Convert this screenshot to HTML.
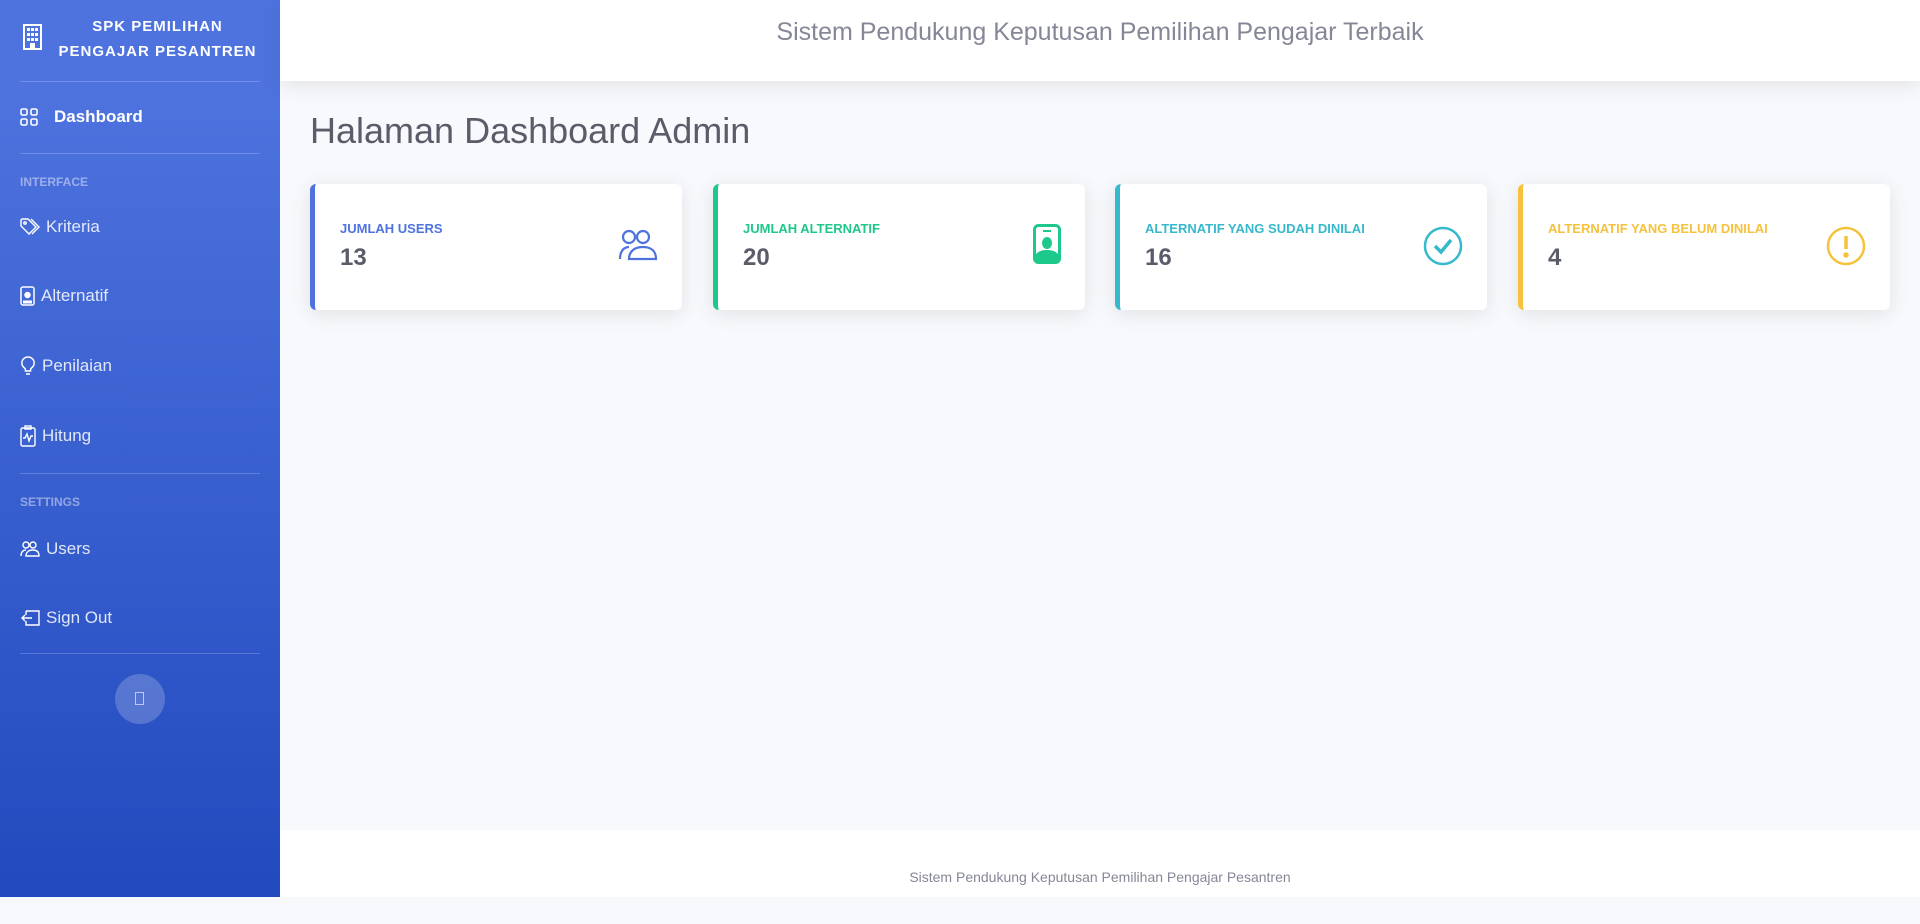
<!DOCTYPE html>
<html><head><meta charset="utf-8"><style>
*{margin:0;padding:0;box-sizing:border-box}
body{width:1920px;height:897px;overflow:hidden;background:#f8f9fc;font-family:"Liberation Sans",sans-serif;position:relative}
.sb{position:absolute;left:0;top:0;width:280px;height:897px;background:linear-gradient(180deg,#4e73df 10%,#224abe 100%);color:#fff}
.brand{position:absolute;left:0;top:0;width:280px;height:81px}
.brand .t{position:absolute;left:50px;top:14px;width:215px;text-align:center;font-weight:bold;font-size:15px;letter-spacing:1px;line-height:25px;white-space:nowrap}
.hr{position:absolute;left:20px;width:240px;border-top:1px solid rgba(255,255,255,.2)}
.it{position:absolute;left:20px;font-size:17px;color:rgba(255,255,255,.85);display:flex;align-items:center;gap:6px;height:24px}
.hd{position:absolute;left:20px;font-size:12px;font-weight:bold;color:rgba(255,255,255,.45)}
.top{position:absolute;left:280px;top:0;width:1640px;height:81px;background:#fff;box-shadow:0 4px 20px rgba(58,59,69,.12);text-align:center;font-size:25px;line-height:64px;color:#858796}
h1{position:absolute;left:310px;top:110px;font-weight:normal;font-size:36px;color:#5a5c69}
.card{position:absolute;top:184px;width:372px;height:126px;background:#fff;border-radius:6px;border-left:5px solid;box-shadow:0 4px 20px rgba(58,59,69,.12)}
.card .l{position:absolute;left:25px;top:37px;font-size:13px;font-weight:bold}
.card .v{position:absolute;left:25px;top:60px;font-size:24px;font-weight:bold;color:#5a5c69}
.card svg{position:absolute;right:24px;top:45px}
.foot{position:absolute;left:280px;top:830px;width:1640px;height:67px;background:#fff;text-align:center;font-size:14px;color:#858796;line-height:94px}
</style></head><body>
<div class="sb">
 <div class="brand">
  <svg style="position:absolute;left:23px;top:24px" width="19" height="26" viewBox="0 0 19 26" fill="none" stroke="#fff" stroke-width="2"><rect x="1" y="1" width="17" height="24"/><g fill="#fff" stroke="none"><rect x="4" y="4" width="3" height="3"/><rect x="8" y="4" width="3" height="3"/><rect x="12" y="4" width="3" height="3"/><rect x="4" y="9" width="3" height="3"/><rect x="8" y="9" width="3" height="3"/><rect x="12" y="9" width="3" height="3"/><rect x="4" y="14" width="3" height="3"/><rect x="8" y="14" width="3" height="3"/><rect x="12" y="14" width="3" height="3"/><rect x="7" y="19" width="5" height="6"/></g></svg>
  <div class="t">SPK PEMILIHAN<br>PENGAJAR PESANTREN</div>
 </div>
 <div class="hr" style="top:81px"></div>
 <div class="it" style="top:105px;color:#fff;font-weight:bold;gap:16px"><svg width="18" height="18" viewBox="0 0 18 18" fill="none" stroke="#fff" stroke-width="1.6"><rect x="1" y="1" width="6" height="6" rx="1.5"/><rect x="11" y="1" width="6" height="6" rx="1.5"/><rect x="1" y="11" width="6" height="6" rx="1.5"/><rect x="11" y="11" width="6" height="6" rx="1.5"/></svg>Dashboard</div>
 <div class="hr" style="top:153px"></div>
 <div class="hd" style="top:175px">INTERFACE</div>
 <div class="it" style="top:215px"><svg width="20" height="18" viewBox="0 0 20 18" fill="none" stroke="#fff" stroke-width="1.4"><path d="M1 2v6l8 8 7-7-8-8H2z"/><circle cx="5" cy="5" r="1.2"/><path d="M11 1l8 8-7 7"/></svg>Kriteria</div>
 <div class="it" style="top:284px"><svg width="15" height="20" viewBox="0 0 15 20" fill="none" stroke="#fff" stroke-width="1.5"><rect x="1" y="1" width="13" height="18" rx="2"/><circle cx="7.5" cy="9" r="2.5" fill="#fff"/><path d="M3 16h9" stroke-width="3"/></svg>Alternatif</div>
 <div class="it" style="top:354px"><svg width="16" height="20" viewBox="0 0 16 20" fill="none" stroke="#fff" stroke-width="1.5"><path d="M8 1a6 6 0 0 0-3.5 11c.7.6 1 1.3 1 2v1h5v-1c0-.7.3-1.4 1-2A6 6 0 0 0 8 1zM6 18h4"/></svg>Penilaian</div>
 <div class="it" style="top:424px"><svg width="16" height="22" viewBox="0 0 16 22" fill="none" stroke="#fff" stroke-width="1.4"><rect x="1" y="3" width="14" height="18" rx="1.5"/><rect x="5" y="1" width="6" height="3"/><path d="M3 13h2l2-4 2 7 2-5h2"/></svg>Hitung</div>
 <div class="hr" style="top:473px"></div>
 <div class="hd" style="top:495px">SETTINGS</div>
 <div class="it" style="top:537px"><svg width="20" height="16" viewBox="0 0 20 16" fill="none" stroke="#fff" stroke-width="1.4"><circle cx="6" cy="4" r="3"/><circle cx="13" cy="4" r="3"/><path d="M1 15c0-4 2-6 5-6M6 15c0-4 3-6 7-6s6 2 6 6z"/></svg>Users</div>
 <div class="it" style="top:606px"><svg width="20" height="16" viewBox="0 0 20 16" fill="none" stroke="#fff" stroke-width="1.4"><path d="M6 1h13v14H6v-4M6 5V1M12 8H2M5 5L2 8l3 3"/></svg>Sign Out</div>
 <div class="hr" style="top:653px"></div>
 <div style="position:absolute;left:115px;top:674px;width:50px;height:50px;border-radius:50%;background:rgba(255,255,255,.2)"><div style="position:absolute;left:20px;top:18px;width:9px;height:13px;border:1px solid rgba(255,255,255,.6)"></div></div>
</div>
<div class="top">Sistem Pendukung Keputusan Pemilihan Pengajar Terbaik</div>
<h1>Halaman Dashboard Admin</h1>
<div class="card" style="left:310px;border-color:#4e73df"><div class="l" style="color:#4e73df">JUMLAH USERS</div><div class="v">13</div>
<svg width="40" height="32" viewBox="0 0 40 32" fill="none" stroke="#4e73df" stroke-width="2.2"><circle cx="11" cy="8" r="6"/><circle cx="25" cy="8" r="6"/><path d="M2 30c0-8 4-12 9-12M11 30c0-8 6-12 14-12s13 4 13 12z"/></svg></div>
<div class="card" style="left:713px;border-color:#1cc88a"><div class="l" style="color:#1cc88a">JUMLAH ALTERNATIF</div><div class="v">20</div>
<svg width="28" height="40" viewBox="0 0 28 40" style="top:40px"><rect x="1.5" y="1.5" width="25" height="37" rx="4" fill="none" stroke="#1cc88a" stroke-width="3"/><rect x="10" y="6" width="8" height="2" fill="#1cc88a"/><ellipse cx="14" cy="19" rx="5" ry="6" fill="#1cc88a"/><path d="M3 30c3-3 6-4 11-4s8 1 11 4v7H3z" fill="#1cc88a"/></svg></div>
<div class="card" style="left:1115px;border-color:#36b9cc"><div class="l" style="color:#36b9cc">ALTERNATIF YANG SUDAH DINILAI</div><div class="v">16</div>
<svg width="40" height="40" viewBox="0 0 40 40" fill="none" stroke="#36b9cc" stroke-width="2.5" style="top:42px"><circle cx="20" cy="20" r="18"/><path d="M12 20l6 6 10-12" stroke-width="3.5"/></svg></div>
<div class="card" style="left:1518px;border-color:#f6c23e"><div class="l" style="color:#f6c23e">ALTERNATIF YANG BELUM DINILAI</div><div class="v">4</div>
<svg width="40" height="40" viewBox="0 0 40 40" fill="none" stroke="#f6c23e" stroke-width="2.5" style="top:42px"><circle cx="20" cy="20" r="18"/><path d="M20 10v13" stroke-width="3.5"/><circle cx="20" cy="29" r="1.5" fill="#f6c23e"/></svg></div>
<div class="foot">Sistem Pendukung Keputusan Pemilihan Pengajar Pesantren</div>
</body></html>
